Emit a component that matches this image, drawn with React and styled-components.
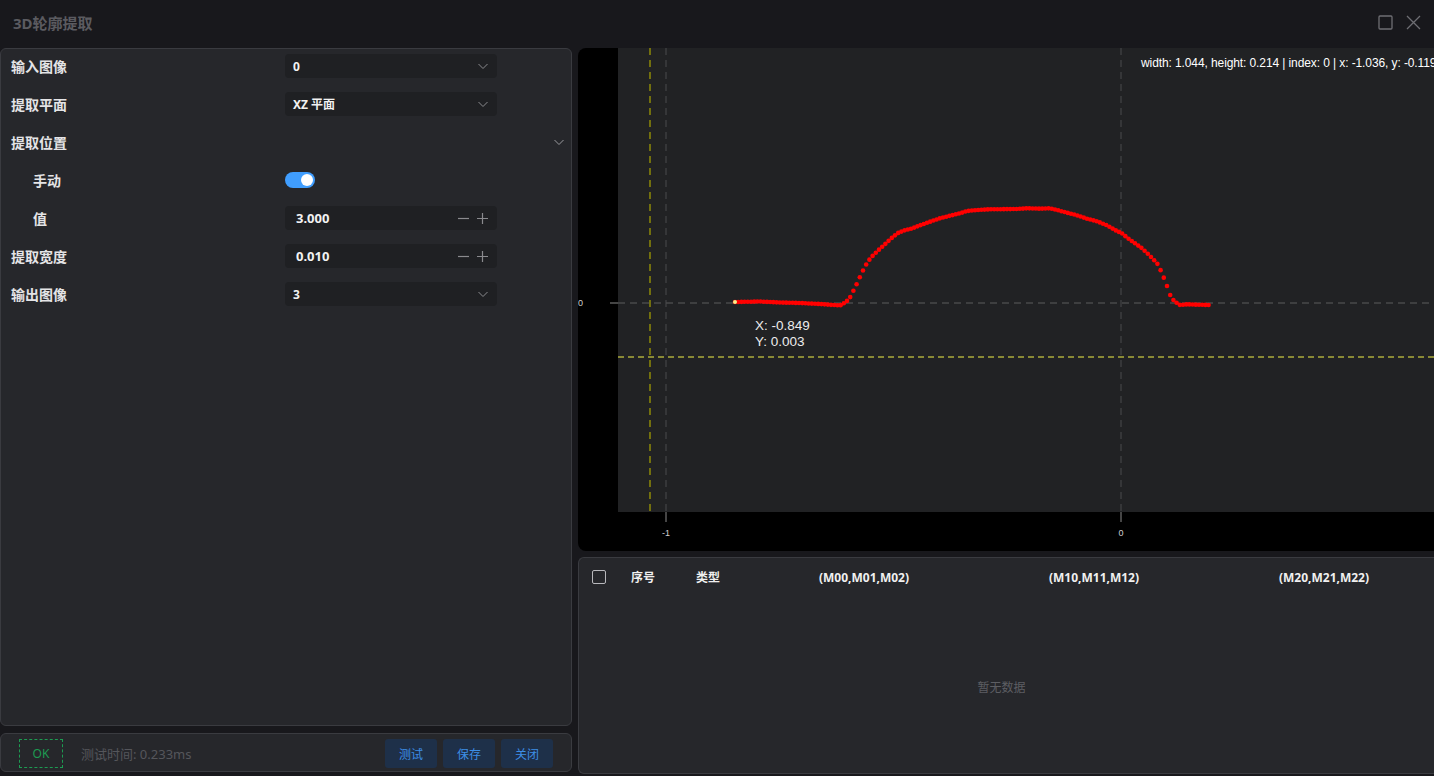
import styled, { createGlobalStyle } from "styled-components";

const GlobalStyle = createGlobalStyle`
  html, body { margin: 0; padding: 0; background: #18181c; }
  body { font-family: "Noto Sans", "Noto Sans CJK SC", sans-serif; overflow: hidden; }
  * { box-sizing: border-box; }
`;

const CURVE = [
  [735, 302], [760, 301.5], [780, 302.5], [800, 303], [820, 304], [840, 305.5],
  [846, 302], [850, 297.5], [853, 291.5], [856, 285.5], [859, 279], [862, 272.5],
  [865, 266.5], [868, 261.5], [871, 257.5], [875, 253.5], [880, 248.7], [886, 243.3],
  [892, 237.7], [898, 233], [904, 230.5], [912, 228.5], [920, 225.3], [930, 221.7],
  [940, 218.3], [950, 215.7], [960, 213.3], [967, 211], [977, 210], [990, 209.3],
  [1017, 209], [1027, 208.3], [1040, 208.7], [1050, 208.3], [1057, 210], [1067, 212.7],
  [1077, 215.3], [1087, 218.7], [1097, 221.3], [1107, 225.3], [1115, 230], [1122, 233.3],
  [1128, 238.3], [1135, 243.3], [1142, 248.3], [1148, 254], [1154, 260], [1158, 264.5],
  [1161, 271], [1164.5, 279.3], [1168, 288.7], [1171, 297.3], [1175, 301.7], [1180, 305],
  [1187, 304.3], [1197, 304.7], [1210, 305],
];

function sampleCurve(step) {
  const pts = [];
  for (let x = CURVE[0][0]; x <= CURVE[CURVE.length - 1][0]; x += step) {
    let i = 0;
    while (i < CURVE.length - 2 && CURVE[i + 1][0] < x) i++;
    const [x0, y0] = CURVE[i];
    const [x1, y1] = CURVE[i + 1];
    const t = (x - x0) / (x1 - x0);
    pts.push([x, y0 + (y1 - y0) * t]);
  }
  return pts;
}

const Page = styled.div`
  width: 100vw;
  height: 100vh;
  background: #18181c;
  display: flex;
  flex-direction: column;
  color: #e6e6e6;
`;

const TitleBar = styled.header`
  height: 48px;
  flex: none;
  display: flex;
  align-items: center;
  padding: 0 13px 4px 13px;
`;

const Title = styled.h1`
  margin: 0;
  flex: 1;
  font-size: 15px;
  font-weight: 700;
  color: #5b5b60;
  font-family: "Noto Sans", "Noto Sans CJK SC", sans-serif;
`;

const WinButtons = styled.div`
  display: flex;
  gap: 13px;
  align-items: center;
  color: #6e6e73;
`;

const Body = styled.main`
  flex: 1;
  min-height: 0;
  display: grid;
  grid-template-columns: 572px 1fr;
  gap: 6px;
`;

const LeftColumn = styled.section`
  display: flex;
  flex-direction: column;
  gap: 7px;
  padding-bottom: 4px;
  min-height: 0;
`;

const Panel = styled.div`
  background: #26272b;
  border: 1px solid #3a3b40;
  border-radius: 6px;
`;

const FormPanel = styled(Panel)`
  flex: 1;
  display: flex;
  flex-direction: column;
  & > :first-child {
    margin-top: -2px;
  }
`;

const Row = styled.div`
  height: 38px;
  flex: none;
  display: grid;
  grid-template-columns: 284px 212px 1fr;
  align-items: center;
`;

const Label = styled.span`
  padding-left: ${({ $indent }) => ($indent ? "32px" : "10px")};
  font-size: 14px;
  font-weight: 700;
  color: #e4e4e6;
`;

const Field = styled.div`
  height: 24px;
  border-radius: 4px;
  background: #1f2023;
  display: flex;
  align-items: center;
  padding: 0 8px 0 ${({ $pad }) => $pad || 8}px;
  font-size: ${({ $size }) => $size || 12}px;
  font-weight: 700;
  color: #f2f2f2;
`;

const FieldValue = styled.span`
  flex: 1;
`;

const Stepper = styled.div`
  display: flex;
  gap: 6px;
  align-items: center;
  color: #8a8a8e;
`;

const Collapse = styled.div`
  grid-column: 3;
  justify-self: end;
  padding-right: 6px;
  display: flex;
  color: #9a9a9e;
`;

const Toggle = styled.div`
  width: 30px;
  height: 16px;
  border-radius: 8px;
  background: #409eff;
  display: flex;
  align-items: center;
  justify-content: flex-end;
  padding: 2px;
  &::after {
    content: "";
    width: 12px;
    height: 12px;
    border-radius: 50%;
    background: #fff;
  }
`;

const BottomBar = styled(Panel)`
  height: 39px;
  flex: none;
  display: flex;
  align-items: center;
  padding: 2px 18px 0 18px;
  gap: 18px;
`;

const OkBadge = styled.div`
  width: 44px;
  height: 29px;
  border: 1px dashed #1d9b52;
  display: flex;
  align-items: center;
  justify-content: center;
  color: #1d9b52;
  font-size: 12px;
`;

const TimeText = styled.span`
  flex: 1;
  font-size: 13px;
  color: #55565b;
`;

const Buttons = styled.div`
  display: flex;
  gap: 6px;
`;

const ActionButton = styled.button`
  width: 52px;
  height: 29px;
  border: none;
  border-radius: 3px;
  background: #1e3049;
  color: #3d8ee6;
  font-size: 12px;
  font-family: "Noto Sans", "Noto Sans CJK SC", sans-serif;
  padding: 0;
`;

const RightColumn = styled.section`
  display: flex;
  flex-direction: column;
  gap: 6px;
  padding-bottom: 2px;
  min-width: 0;
  min-height: 0;
`;

const ChartPanel = styled.div`
  position: relative;
  height: 503px;
  flex: none;
  background: #000;
  border-radius: 8px 0 0 8px;
  overflow: hidden;
  display: grid;
  grid-template-columns: 40px 1fr;
  grid-template-rows: 464px 1fr;
`;

const PlotArea = styled.div`
  grid-column: 2;
  grid-row: 1;
  background: #212224;
`;

const ChartOverlay = styled.svg`
  position: absolute;
  inset: 0;
  width: 856px;
  height: 503px;
`;

const InfoText = styled.div`
  position: absolute;
  top: 8px;
  left: 563px;
  white-space: nowrap;
  font-family: "Liberation Sans", Arial, sans-serif;
  font-size: 12px;
  letter-spacing: -0.1px;
  color: #ffffff;
`;

const TablePanel = styled(Panel)`
  flex: 1;
  border-radius: 6px 0 0 6px;
  border-right: none;
  display: flex;
  flex-direction: column;
  overflow: hidden;
`;

const TableHead = styled.div`
  height: 38px;
  flex: none;
  display: grid;
  grid-template-columns: 40px 65px 65px repeat(3, 230px);
  align-items: center;
  font-size: 12px;
  font-weight: 700;
  color: #f0f0f0;
  white-space: nowrap;
`;

const HeadCell = styled.div`
  padding-left: ${({ $center }) => ($center ? 0 : 12)}px;
  display: flex;
  justify-content: ${({ $center }) => ($center ? "center" : "flex-start")};
`;

const Checkbox = styled.span`
  width: 14px;
  height: 14px;
  border: 1px solid #b8b8bc;
  border-radius: 2px;
`;

const Empty = styled.div`
  flex: 1;
  display: flex;
  align-items: center;
  justify-content: center;
  padding-right: 10px;
  padding-top: 4px;
  font-size: 12px;
  color: #5d5e63;
`;

const Chevron = () => (
  <svg width="12" height="12" viewBox="0 0 12 12" fill="none" stroke="currentColor" strokeWidth="1">
    <path d="M1.5 4 L6 8.5 L10.5 4" />
  </svg>
);

const SelectField = ({ value }) => (
  <Field>
    <FieldValue>{value}</FieldValue>
    <Stepper>
      <Chevron />
    </Stepper>
  </Field>
);

const NumberField = ({ value }) => (
  <Field $pad={11} $size={13}>
    <FieldValue>{value}</FieldValue>
    <Stepper>
      <svg width="13" height="13" viewBox="0 0 13 13" stroke="currentColor" strokeWidth="1.2">
        <path d="M1 6.5 H12" />
      </svg>
      <svg width="13" height="13" viewBox="0 0 13 13" stroke="currentColor" strokeWidth="1.2">
        <path d="M1 6.5 H12 M6.5 1 V12" />
      </svg>
    </Stepper>
  </Field>
);

function Chart() {
  const dots = sampleCurve(3.2);
  return (
    <ChartPanel>
      <PlotArea />
      <ChartOverlay viewBox="0 0 856 503">
        <g transform="translate(-578,-48)" fontFamily="Liberation Sans, Arial, sans-serif">
          <line x1="610" y1="303" x2="618" y2="303" stroke="#8a8a8a" />
          <line x1="618" y1="303" x2="1434" y2="303" stroke="#5c5c5c" strokeDasharray="7 5" />
          <line x1="666" y1="48" x2="666" y2="512" stroke="#4a4a4c" strokeDasharray="7 5" />
          <line x1="1121" y1="48" x2="1121" y2="512" stroke="#4a4a4c" strokeDasharray="7 5" />
          <line x1="666" y1="512" x2="666" y2="522" stroke="#8a8a8a" />
          <line x1="1121" y1="512" x2="1121" y2="522" stroke="#8a8a8a" />
          <line x1="650" y1="48" x2="650" y2="512" stroke="#a8a400" strokeWidth="1.2" strokeDasharray="7 5" />
          <line x1="618" y1="357" x2="1434" y2="357" stroke="#f2f046" strokeDasharray="6 4" />
          <text x="578" y="306" fontSize="9" fill="#d0d0d0">0</text>
          <text x="666" y="536" fontSize="9" fill="#d0d0d0" textAnchor="middle">-1</text>
          <text x="1121" y="536" fontSize="9" fill="#d0d0d0" textAnchor="middle">0</text>
          {dots.map(([x, y], i) => (
            <circle key={i} cx={x} cy={y} r="2.3" fill="#ff0000" />
          ))}
          <circle cx="735" cy="302" r="2" fill="#f6f08a" />
          <text x="755" y="330" fontSize="13.5" fill="#ececec">X: -0.849</text>
          <text x="755" y="346" fontSize="13.5" fill="#ececec">Y: 0.003</text>
        </g>
      </ChartOverlay>
      <InfoText>width: 1.044, height: 0.214 | index: 0 | x: -1.036, y: -0.119</InfoText>
    </ChartPanel>
  );
}

export default function App() {
  return (
    <Page>
      <GlobalStyle />
      <TitleBar>
        <Title>3D轮廓提取</Title>
        <WinButtons>
          <svg width="15" height="15" viewBox="0 0 15 15" fill="none" stroke="currentColor" strokeWidth="1.3">
            <rect x="1" y="1" width="13" height="13" rx="1" />
          </svg>
          <svg width="15" height="15" viewBox="0 0 15 15" fill="none" stroke="currentColor" strokeWidth="1.3">
            <path d="M1 1 L14 14 M14 1 L1 14" />
          </svg>
        </WinButtons>
      </TitleBar>
      <Body>
        <LeftColumn>
          <FormPanel>
            <Row>
              <Label>输入图像</Label>
              <SelectField value="0" />
            </Row>
            <Row>
              <Label>提取平面</Label>
              <SelectField value="XZ 平面" />
            </Row>
            <Row>
              <Label>提取位置</Label>
              <Collapse>
                <Chevron />
              </Collapse>
            </Row>
            <Row>
              <Label $indent>手动</Label>
              <Toggle />
            </Row>
            <Row>
              <Label $indent>值</Label>
              <NumberField value="3.000" />
            </Row>
            <Row>
              <Label>提取宽度</Label>
              <NumberField value="0.010" />
            </Row>
            <Row>
              <Label>输出图像</Label>
              <SelectField value="3" />
            </Row>
          </FormPanel>
          <BottomBar>
            <OkBadge>OK</OkBadge>
            <TimeText>测试时间: 0.233ms</TimeText>
            <Buttons>
              <ActionButton>测试</ActionButton>
              <ActionButton>保存</ActionButton>
              <ActionButton>关闭</ActionButton>
            </Buttons>
          </BottomBar>
        </LeftColumn>
        <RightColumn>
          <Chart />
          <TablePanel>
            <TableHead>
              <HeadCell $center>
                <Checkbox />
              </HeadCell>
              <HeadCell>序号</HeadCell>
              <HeadCell>类型</HeadCell>
              <HeadCell $center>(M00,M01,M02)</HeadCell>
              <HeadCell $center>(M10,M11,M12)</HeadCell>
              <HeadCell $center>(M20,M21,M22)</HeadCell>
            </TableHead>
            <Empty>暂无数据</Empty>
          </TablePanel>
        </RightColumn>
      </Body>
    </Page>
  );
}
